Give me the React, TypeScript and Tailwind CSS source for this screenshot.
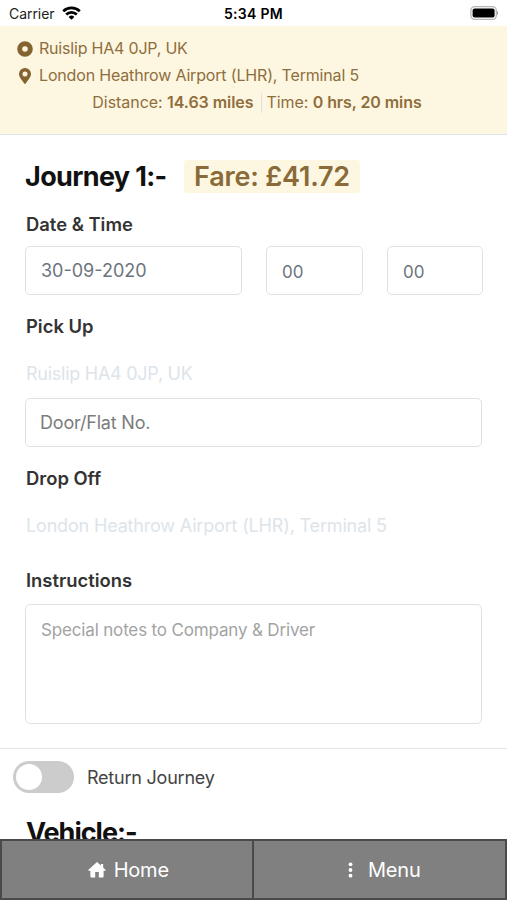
import React, { useState } from 'react';

interface Trip {
  from: string;
  to: string;
  distance: string;
  duration: string;
  fare: string;
  date: string;
}

const trip: Trip = {
  from: 'Ruislip HA4 0JP, UK',
  to: 'London Heathrow Airport (LHR), Terminal 5',
  distance: '14.63 miles',
  duration: '0 hrs, 20 mins',
  fare: '£41.72',
  date: '30-09-2020',
};

const StatusBar: React.FC = () => (
  <div className="grid h-[26px] shrink-0 grid-cols-3 items-center px-[9px] text-[14px] text-[#222]">
    <div className="flex items-center gap-[7px]">
      <span className="tracking-[-0.05px]">Carrier</span>
      <svg width="19" height="14" viewBox="0 0 19 14" fill="none" stroke="#000" strokeWidth="2.7">
        <path d="M1.2 5.2a12 12 0 0 1 16.6 0" />
        <path d="M4.2 8.5a7.6 7.6 0 0 1 10.6 0" />
        <path d="M9.5 13.8 6.6 10.9a4.2 4.2 0 0 1 5.8 0z" fill="#000" stroke="none" />
      </svg>
    </div>
    <span className="text-center font-semibold tracking-[0.3px] text-black">5:34 PM</span>
    <svg className="justify-self-end" width="28" height="14" viewBox="0 0 28 14">
      <rect x="0.9" y="0.7" width="25.4" height="12.6" rx="3.8" fill="#fff" stroke="#b5b5b5" strokeWidth="1.3" />
      <rect x="2.6" y="2.4" width="22" height="9.2" rx="2" fill="#000" />
      <path d="M27 4.8c1.3.8 1.3 3.6 0 4.4z" fill="#999" />
    </svg>
  </div>
);

const TripSummary: React.FC = () => (
  <div className="h-[109px] shrink-0 border-b border-[#dee2e6] bg-[#fdf7e2] pt-[9px] text-[16px] leading-[27px] text-[#8f6e3c]">
    <div className="flex items-center pl-[17px]">
      <svg width="16" height="16" viewBox="0 0 16 16">
        <circle cx="8" cy="8" r="5.3" fill="none" stroke="#856331" strokeWidth="5" />
      </svg>
      <span className="ml-[6px] tracking-[-0.2px]">{trip.from}</span>
    </div>
    <div className="flex items-center pl-[19px]">
      <svg width="12" height="16" viewBox="0 0 12 16">
        <path
          fill="#856331"
          fillRule="evenodd"
          d="M6 0a6 6 0 0 0-6 6c0 2.6 1.2 3.7 5.3 9.6a.9.9 0 0 0 1.4 0C10.8 9.7 12 8.6 12 6a6 6 0 0 0-6-6zm0 3.4a2.5 2.5 0 1 1 0 5 2.5 2.5 0 0 1 0-5z"
        />
      </svg>
      <span className="ml-2 tracking-[-0.17px]">{trip.to}</span>
    </div>
    <div className="flex items-center justify-center pl-[7px]">
      <span className="pr-[7px] tracking-[-0.05px]">
        Distance: <b className="font-semibold">{trip.distance}</b>
      </span>
      <span className="flex h-5 items-center border-l border-[#dee2e6] pl-[5px] tracking-[-0.08px]">
        <span>
          Time: <b className="font-semibold">{trip.duration}</b>
        </span>
      </span>
    </div>
  </div>
);

const Label: React.FC<{ children: React.ReactNode }> = ({ children }) => (
  <h3 className="pl-px text-[18.4px] leading-6 font-semibold text-[#333]">{children}</h3>
);

const inputClass = 'h-[49px] rounded-[5px] border border-[#dfe2e5] bg-white outline-none';

const App: React.FC = () => {
  const [returnJourney, setReturnJourney] = useState(false);

  return (
    <div className="flex h-[900px] w-full flex-col overflow-hidden bg-white font-['Inter','Liberation_Sans',sans-serif]">
      <StatusBar />
      <TripSummary />

      <main className="min-h-0 flex-1 overflow-hidden">
        <section className="h-[614px] border-b border-[#e4e6e8] px-[25px] pt-[25px]">
          <div className="flex h-[33px] items-center">
            <h2 className="w-[159px] pt-[2px] text-[27px] font-bold tracking-[-0.65px] whitespace-nowrap text-[#111]">
              Journey 1:-
            </h2>
            <span className="flex h-[33px] w-[176px] items-center justify-center rounded-[3px] bg-[#fdf7e2] pt-[2px] text-[27px] font-semibold tracking-[-0.2px] whitespace-nowrap text-[#8a6a38]">
              Fare: {trip.fare}
            </span>
          </div>

          <div className="mt-[19px]">
            <Label>Date &amp; Time</Label>
          </div>
          <div className="mt-[10px] flex gap-6 text-[#6c757d]">
            <input className={`${inputClass} w-[217px] px-[15px] text-[18px]`} defaultValue={trip.date} />
            <input className={`${inputClass} w-[97px] px-[15px] pt-[2px] text-[17px]`} defaultValue="00" />
            <input className={`${inputClass} w-[96px] px-[15px] pt-[2px] text-[17px]`} defaultValue="00" />
          </div>

          <div className="mt-[19px]">
            <Label>Pick Up</Label>
          </div>
          <p className="mt-6 pl-px text-[18px] leading-6 tracking-[-0.26px] text-[#dde4ea]">{trip.from}</p>
          <input
            className={`${inputClass} mt-3 w-full px-[14px] text-[18px] tracking-[-0.2px] placeholder:text-[#7c7c7c]`}
            placeholder="Door/Flat No."
          />

          <div className="mt-[19px]">
            <Label>Drop Off</Label>
          </div>
          <p className="mt-6 pl-px text-[18px] leading-6 tracking-[-0.17px] text-[#dde4ea]">{trip.to}</p>

          <div className="mt-[30px]">
            <Label>Instructions</Label>
          </div>
          <textarea
            className="mt-3 block h-[120px] w-full resize-none rounded-[5px] border border-[#dfe2e5] px-[15px] py-3 text-[17px] leading-[26px] tracking-[-0.16px] outline-none placeholder:text-[#a3a3a3]"
            placeholder="Special notes to Company &amp; Driver"
          />
        </section>

        <section className="px-[13px] pt-[12px]">
          <div className="flex items-center">
            <button
              type="button"
              role="switch"
              aria-checked={returnJourney}
              aria-label="Return Journey"
              onClick={() => setReturnJourney(!returnJourney)}
              className={`flex h-8 w-[61px] items-center rounded-full px-[3px] ${
                returnJourney ? 'justify-end bg-[#2196f3]' : 'justify-start bg-[#ccc]'
              }`}
            >
              <span className="h-[26px] w-[26px] rounded-full bg-white" />
            </button>
            <span className="ml-[13px] text-[18px] tracking-[-0.22px] text-[#444]">Return Journey</span>
          </div>
          <h2 className="mt-[23px] ml-[13px] text-[27px] leading-[34px] font-bold tracking-[-1px] text-[#111]">
            Vehicle:-
          </h2>
        </section>
      </main>

      <nav className="grid h-[61px] shrink-0 grid-cols-2 border-2 border-[#4a4a4d] bg-[#808080] text-[20px] text-white">
        <button type="button" className="flex items-center justify-center border-r-2 border-[#4a4a4d] pl-[3px]">
          <svg width="18" height="16" viewBox="0 0 18 16" fill="#fff">
            <path d="M9 0 .5 7.8c-.4.5-.2 1 .4 1h1.5v5.700q0 .9.900.9h3.900V10h3.600v5.400h3.900q.9 0 .9-.9V8.800h1.500c.6 0 .8-.5.400-1l-2.300-2.100V2h-2.300v1.600z" />
          </svg>
          <span className="ml-2 tracking-[-0.2px]">Home</span>
        </button>
        <button type="button" className="flex items-center justify-center pl-[10px]">
          <svg width="5" height="16" viewBox="0 0 5 16" fill="#fff">
            <circle cx="2.5" cy="2.3" r="1.9" />
            <circle cx="2.5" cy="8" r="1.9" />
            <circle cx="2.5" cy="13.7" r="1.9" />
          </svg>
          <span className="ml-[15px] tracking-[-0.2px]">Menu</span>
        </button>
      </nav>
    </div>
  );
};

export default App;
